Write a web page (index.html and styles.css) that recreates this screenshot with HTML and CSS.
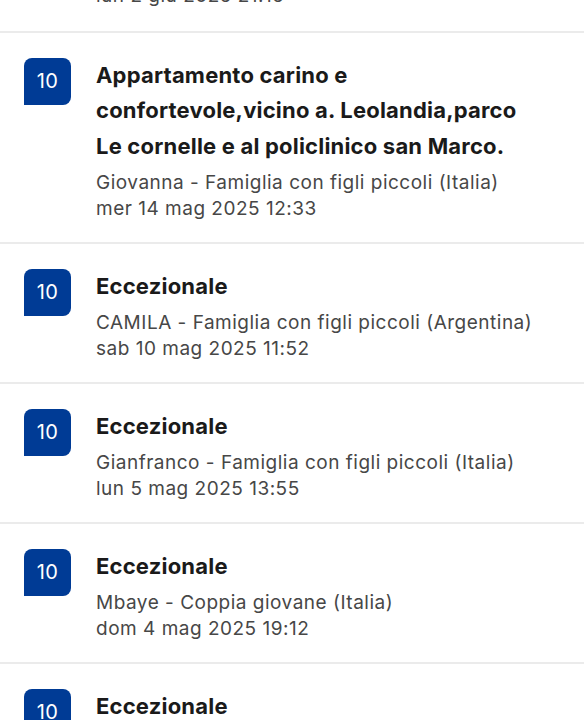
FILE: index.html
```html
<!DOCTYPE html>
<html lang="it">
<head>
<meta charset="utf-8">
<title>Recensioni</title>
<link rel="stylesheet" href="styles.css">
</head>
<body>
<div class="list">
  <div class="prev">
    <div class="meta">lun 2 giu 2025 21:15</div>
  </div>
  <div class="review">
    <div class="badge">10</div>
    <div class="body">
      <div class="title">Appartamento carino e confortevole,vicino a. Leolandia,parco Le cornelle e al policlinico san Marco.</div>
      <div class="meta">Giovanna - Famiglia con figli piccoli (Italia)<br>mer 14 mag 2025 12:33</div>
    </div>
  </div>
  <div class="review">
    <div class="badge">10</div>
    <div class="body">
      <div class="title">Eccezionale</div>
      <div class="meta">CAMILA - Famiglia con figli piccoli (Argentina)<br>sab 10 mag 2025 11:52</div>
    </div>
  </div>
  <div class="review">
    <div class="badge">10</div>
    <div class="body">
      <div class="title">Eccezionale</div>
      <div class="meta">Gianfranco - Famiglia con figli piccoli (Italia)<br>lun 5 mag 2025 13:55</div>
    </div>
  </div>
  <div class="review">
    <div class="badge">10</div>
    <div class="body">
      <div class="title">Eccezionale</div>
      <div class="meta">Mbaye - Coppia giovane (Italia)<br>dom 4 mag 2025 19:12</div>
    </div>
  </div>
  <div class="review">
    <div class="badge">10</div>
    <div class="body">
      <div class="title">Eccezionale</div>
      <div class="meta">Ilaria - Famiglia con figli piccoli (Italia)<br>ven 2 mag 2025 10:20</div>
    </div>
  </div>
</div>
</body>
</html>
```
FILE: styles.css
```css
html, body {
  margin: 0;
  padding: 0;
  background: #ffffff;
  overflow: hidden;
}
body {
  font-family: Inter, "Noto Sans", sans-serif;
  -webkit-font-smoothing: antialiased;
}
.list {
  display: flex;
  flex-direction: column;
}
.prev {
  margin-top: -17px;
  padding: 0 0 22px 96px;
  border-bottom: 2px solid #ebebeb;
}
.review {
  display: flex;
  align-items: flex-start;
  gap: 25px;
  padding: 24.5px 40px 20px 24px;
  border-bottom: 2px solid #ebebeb;
}
.badge {
  flex: 0 0 47px;
  width: 47px;
  height: 47px;
  background: #003b95;
  color: #ffffff;
  border-radius: 8px 8px 8px 0;
  display: flex;
  align-items: center;
  justify-content: center;
  font-size: 20px;
  font-weight: 400;
  letter-spacing: 0.3px;
}
.body {
  display: flex;
  flex-direction: column;
  gap: 6px;
  min-width: 0;
}
.title {
  font-size: 22px;
  line-height: 35.5px;
  font-weight: 700;
  letter-spacing: 0.2px;
  color: #1a1a1a;
}
.meta {
  font-size: 19px;
  line-height: 26px;
  letter-spacing: 0.5px;
  color: #474747;
}
```
